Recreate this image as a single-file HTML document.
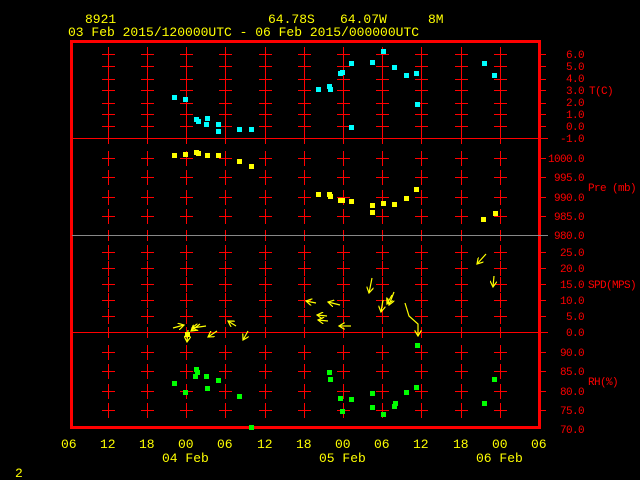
<!DOCTYPE html>
<html><head><meta charset="utf-8"><style>
html,body{margin:0;padding:0;background:#000;width:640px;height:480px;overflow:hidden}
svg{display:block}
text{font-family:"Liberation Mono",monospace;font-size:13px}
#rl text{font-size:11px;letter-spacing:-0.6px}
</style></head><body>
<svg width="640" height="480" xmlns="http://www.w3.org/2000/svg">
<defs>
<marker id="ah" markerWidth="6" markerHeight="6" refX="5" refY="3" orient="auto"><path d="M0,0 L5,3 L0,6" fill="none" stroke="#ff0" stroke-width="1"/></marker>
</defs>
<g fill="#ff0">
<text x="85" y="23">8921</text>
<text x="268" y="23">64.78S</text>
<text x="340" y="23">64.07W</text>
<text x="428" y="23">8M</text>
<text x="68" y="36">03 Feb 2015/120000UTC - 06 Feb 2015/000000UTC</text>
<text x="61" y="448">06</text><text x="100" y="448">12</text><text x="139" y="448">18</text><text x="178" y="448">00</text><text x="217" y="448">06</text><text x="257" y="448">12</text><text x="296" y="448">18</text><text x="335" y="448">00</text><text x="374" y="448">06</text><text x="413" y="448">12</text><text x="453" y="448">18</text><text x="492" y="448">00</text><text x="531" y="448">06</text>
<text x="162" y="462">04 Feb</text><text x="319" y="462">05 Feb</text><text x="476" y="462">06 Feb</text>
<text x="15" y="477">2</text>
</g>
<g stroke="#f00" stroke-width="1" id="crosses" shape-rendering="crispEdges"></g>
<rect x="71.5" y="41.5" width="468" height="386" fill="none" stroke="#f00" stroke-width="3" shape-rendering="crispEdges"/>
<g shape-rendering="crispEdges">
<line x1="72" y1="138.5" x2="548" y2="138.5" stroke="#f00" stroke-width="1"/>
<line x1="72" y1="235.5" x2="548" y2="235.5" stroke="#888" stroke-width="1"/>
<line x1="72" y1="332.5" x2="548" y2="332.5" stroke="#f00" stroke-width="1"/>
</g>
<g fill="#f00" id="rl"></g>
<g id="pts"></g>
<g stroke="#ff0" stroke-width="1.2" fill="none" marker-end="url(#ah)">
<path d="M173,328L184,325"/><path d="M206,326L192,328"/><path d="M200,324L191,331"/><path d="M236,326L228,321"/><path d="M217,331L208,337"/><path d="M248,331L243,340"/>
<path d="M316,303L306,301"/><path d="M340,305L328,302"/><path d="M327,316L317,315"/><path d="M328,321L318,320"/><path d="M351,326L339,326"/>
<path d="M372,278L369,293"/><path d="M383,300L381,312"/><path d="M394,292L389,305"/><path d="M392,295L387,304"/><path d="M405,303L409,316L418,324L418,336"/><path d="M486,254L477,264"/><path d="M494,276L493,287"/>
<path d="M188,330L187,342"/>
</g>
<script>
var s="http://www.w3.org/2000/svg";
var xs=[108,147,186,225,265,304,343,382,421,461,500];
var ys=[54,66,79,90,103,114,126,158,177,197,216,252,268,284,300,316,352,371,391,410];
var g=document.getElementById('crosses'),d="";
xs.forEach(function(x){var X=x+0.5;ys.forEach(function(y){var Y=y+0.5;d+="M"+X+","+(y-7)+"V"+(y+8)+"M"+(x-6)+","+Y+"H"+(x+7);});
[138,235,332].forEach(function(y){d+="M"+X+","+(y-5)+"V"+(y+6);});});
ys.concat([138,235,332]).forEach(function(y){d+="M539,"+(y+0.5)+"H546";});
var p=document.createElementNS(s,'path');p.setAttribute('d',d);g.appendChild(p);
var rl=document.getElementById('rl');
function T(str,x,y,anchor){var t=document.createElementNS(s,'text');t.textContent=str;t.setAttribute('x',x);t.setAttribute('y',y);if(anchor)t.setAttribute('text-anchor',anchor);rl.appendChild(t);}
[["6.0",54],["5.0",66],["4.0",78],["3.0",90],["2.0",102],["1.0",114],["0.0",126],["-1.0",138],["1000.0",158],["995.0",177],["990.0",197],["985.0",216],["980.0",235],["25.0",252],["20.0",268],["15.0",284],["10.0",300],["5.0",316],["0.0",332],["90.0",352],["85.0",371],["80.0",391],["75.0",410],["70.0",429]].forEach(function(a){T(a[0],584,a[1]+4,'end');});
T("T(C)",589,94);T("Pre (mb)",588,191);T("SPD(MPS)",588,288);T("RH(%)",588,385);
var pts=document.getElementById('pts');
function add(arr,c){arr.forEach(function(q){var r=document.createElementNS(s,'rect');r.setAttribute('x',q[0]-2);r.setAttribute('y',q[1]-2);r.setAttribute('width',5);r.setAttribute('height',5);r.setAttribute('fill',c);pts.appendChild(r);});}
add([[174,97],[185,99],[196,119],[198,121],[207,118],[206,124],[218,124],[218,131],[239,129],[251,129],[318,89],[329,86],[330,89],[340,73],[342,72],[351,63],[351,127],[372,62],[383,51],[394,67],[406,75],[416,73],[417,104],[484,63],[494,75]],"#0ff");
add([[174,155],[185,154],[196,152],[198,153],[207,155],[218,155],[239,161],[251,166],[318,194],[329,194],[330,196],[340,200],[342,200],[351,201],[372,205],[372,212],[383,203],[394,204],[406,198],[416,189],[483,219],[495,213],[187,334]],"#ff0");
add([[174,383],[185,392],[196,369],[197,372],[195,376],[206,376],[207,388],[218,380],[239,396],[251,427],[329,372],[330,379],[340,398],[342,411],[351,399],[372,393],[372,407],[383,414],[394,406],[395,403],[406,392],[416,387],[417,345],[484,403],[494,379]],"#0f0");
</script>
</svg>
</body></html>
